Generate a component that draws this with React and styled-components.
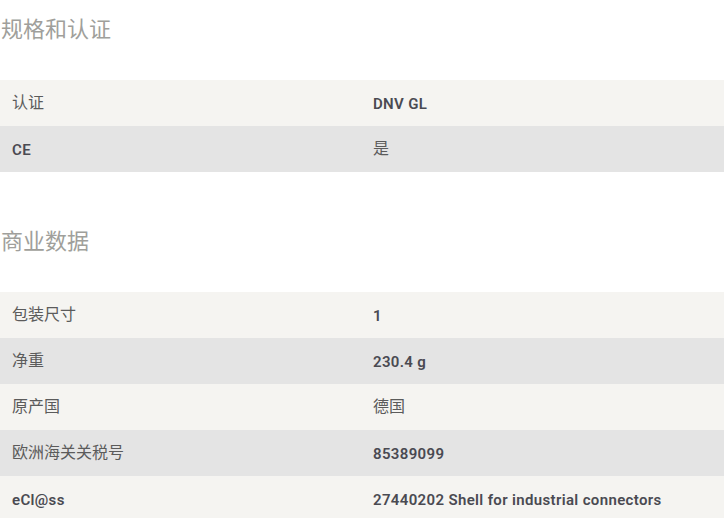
import styled, { createGlobalStyle } from "styled-components";

const certRows = [
  ["认证", "DNV GL"],
  ["CE", "是"],
];

const tradeRows = [
  ["包装尺寸", "1"],
  ["净重", "230.4 g"],
  ["原产国", "德国"],
  ["欧洲海关关税号", "85389099"],
  ["eCl@ss", "27440202 Shell for industrial connectors"],
];

const isCjk = (text) => /[\u4e00-\u9fff]/.test(text);

function SpecTable({ rows }) {
  return (
    <Table>
      {rows.map(([label, value], i) => (
        <Row key={label} $alt={i % 2 === 1}>
          <Cell $cjk={isCjk(label)}>{label}</Cell>
          <Cell $cjk={isCjk(value)}>{value}</Cell>
        </Row>
      ))}
    </Table>
  );
}

function App() {
  return (
    <>
      <GlobalStyle />
      <Page>
        <Section>
          <Heading>规格和认证</Heading>
          <SpecTable rows={certRows} />
        </Section>
        <Section>
          <Heading>商业数据</Heading>
          <SpecTable rows={tradeRows} />
        </Section>
      </Page>
    </>
  );
}

const GlobalStyle = createGlobalStyle`
  body {
    margin: 0;
    background: #ffffff;
    font-family: Roboto, "Liberation Sans", "Noto Sans CJK SC", sans-serif;
  }
`;

const Page = styled.div`
  display: flex;
  flex-direction: column;
  gap: 53px;
  padding-top: 13px;
`;

const Section = styled.section`
  display: flex;
  flex-direction: column;
  gap: 39px;
`;

const Heading = styled.h2`
  margin: 0;
  padding-left: 1px;
  font-family: "Noto Sans CJK SC", sans-serif;
  font-weight: 400;
  font-size: 22px;
  line-height: 28px;
  color: #a09f9b;
`;

const Table = styled.div`
  display: flex;
  flex-direction: column;
`;

const Row = styled.div`
  display: grid;
  grid-template-columns: 361px 1fr;
  align-items: center;
  height: 46px;
  padding-left: 12px;
  background: ${(p) => (p.$alt ? "#e4e4e4" : "#f5f4f1")};
`;

const Cell = styled.div`
  font-family: Roboto, "Noto Sans CJK SC", sans-serif;
  font-size: ${(p) => (p.$cjk ? "16px" : "15px")};
  line-height: 20px;
  font-weight: ${(p) => (p.$cjk ? 400 : 600)};
  letter-spacing: ${(p) => (p.$cjk ? "0" : "0.35px")};
  color: ${(p) => (p.$cjk ? "#5b5b5b" : "#4a4a52")};
  padding-top: ${(p) => (p.$cjk ? "0" : "1px")};
`;

export default App;
